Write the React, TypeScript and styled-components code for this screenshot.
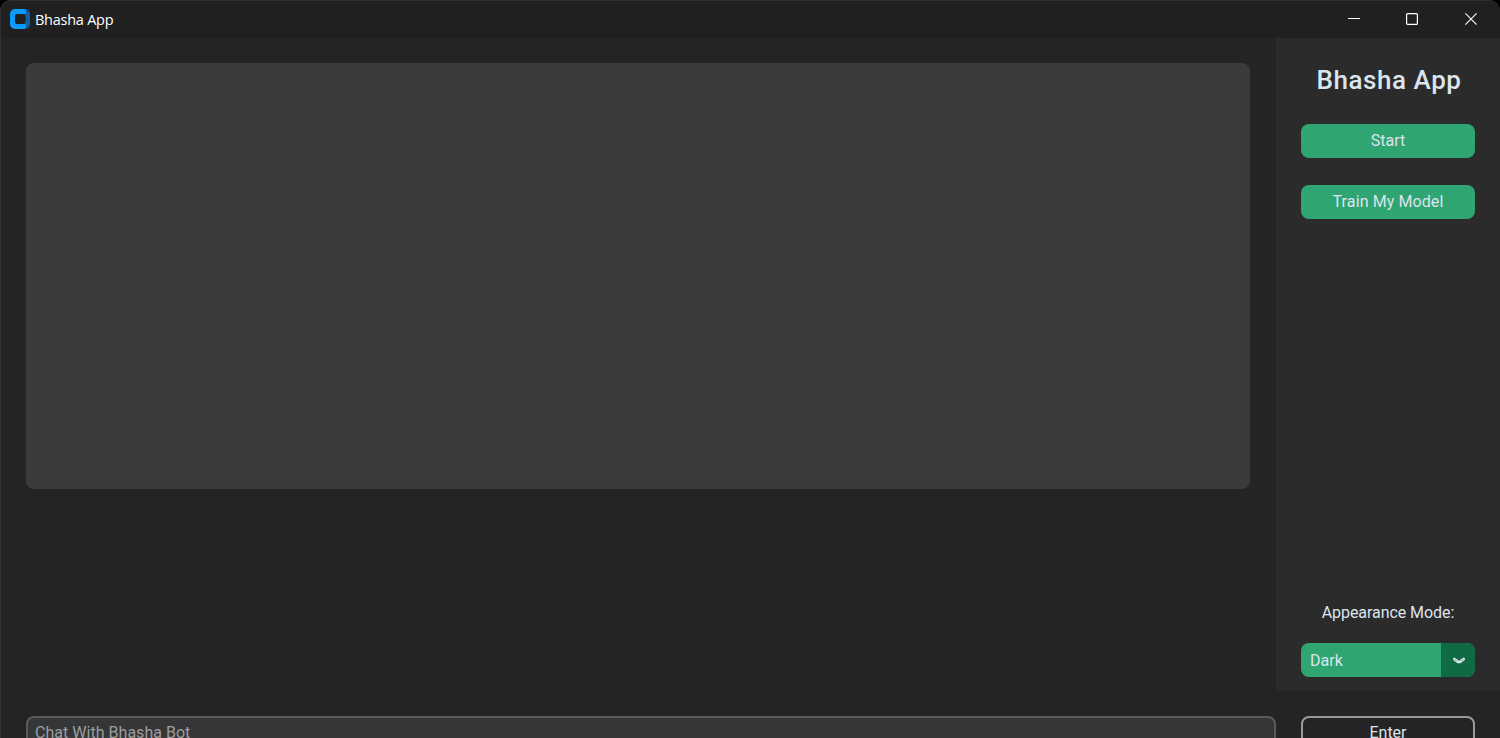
import { useState } from "react";
import styled, { createGlobalStyle } from "styled-components";

const App = () => {

    const [message, setMessage] = useState<string>("")
    const [mode, setMode] = useState<string>("Dark")

    const onModeClickHandler = () => {
        setMode(mode === "Dark" ? "Light" : "Dark")
    }

    return (
        <>
            <GlobalStyle/>
            <Window>
                <TitleBar>
                    <AppIcon/>
                    <TitleText>Bhasha App</TitleText>
                    <WindowControls/>
                </TitleBar>
                <Content>
                    <ChatArea>
                        <ChatBox/>
                    </ChatArea>
                    <SideBar>
                        <Logo>Bhasha App</Logo>
                        <GreenBtn>Start</GreenBtn>
                        <GreenBtn $spacing="0.1px">Train My Model</GreenBtn>
                        <ModeLabel>Appearance Mode:</ModeLabel>
                        <ModeMenu onClick={() => onModeClickHandler()}>
                            <ModeValue>{mode}</ModeValue>
                            <ModeArrow>
                                <svg width="14" height="10" viewBox="0 0 14 10" fill="none">
                                    <path d="M2.4 3.1L5.4 5.4Q7 6.4 8.6 5.4L11.6 3.1" stroke="#DCE4EE" strokeWidth="2.9"
                                          strokeLinecap="round" strokeLinejoin="round"/>
                                    <path d="M2.6 3.4L5 5.1M9 5.1L11.4 3.4" stroke="#5E9A83" strokeWidth="0.8"/>
                                </svg>
                            </ModeArrow>
                        </ModeMenu>
                    </SideBar>
                </Content>
                <BottomArea>
                    <ChatInput
                        value={message}
                        placeholder="Chat With Bhasha Bot"
                        onChange={(e) => setMessage(e.target.value)}
                    />
                    <EnterBtn>Enter</EnterBtn>
                </BottomArea>
            </Window>
        </>
    )
}

export default App

const AppIcon = () => (
    <IconSvg width="20" height="20" viewBox="0 0 20 20">
        <rect x="8" width="12" height="20" rx="5" fill="#0F5FA8"/>
        <path d="M5 0H14.5L16 2V4L14.5 5.5H7L5.5 7V13L7 14.5H14.5L16 16V18L14.5 20H5A5 5 0 0 1 0 15V5A5 5 0 0 1 5 0Z"
              fill="#0A9BFB"/>
        <rect x="5" y="5" width="10.5" height="10" rx="2" fill="#202020"/>
    </IconSvg>
)

const WindowControls = () => (
    <Controls>
        <ControlBtn aria-label="Minimize">
            <svg width="12" height="12" viewBox="0 0 12 12">
                <path d="M0 5.5H12" stroke="#FFFFFF"/>
            </svg>
        </ControlBtn>
        <ControlBtn aria-label="Maximize">
            <svg width="12" height="12" viewBox="0 0 12 12">
                <rect x="0.6" y="0.6" width="10.8" height="10.8" rx="1" fill="none" stroke="#FFFFFF" strokeWidth="1.2"/>
            </svg>
        </ControlBtn>
        <ControlBtn aria-label="Close">
            <svg width="12" height="12" viewBox="0 0 12 12">
                <path d="M0.4 0.4L11.6 11.6M11.6 0.4L0.4 11.6" stroke="#FFFFFF" strokeWidth="1.1"/>
            </svg>
        </ControlBtn>
    </Controls>
)

const GlobalStyle = createGlobalStyle`
    * {
        box-sizing: border-box;
    }

    body {
        margin: 0;
        overflow: hidden;
        background-color: #000000;
    }

    button, input {
        font-family: Roboto, sans-serif;
    }
`

const Window = styled.div`
    display: flex;
    flex-direction: column;
    width: 1500px;
    height: 738px;
    overflow: hidden;
    border-top: 1px solid #303030;
    border-left: 1px solid #303030;
    border-radius: 11px 11px 0 0;
    background-color: #242424;
    font-family: Roboto, sans-serif;
    color: #DCE4EE;
`

const TitleBar = styled.div`
    display: flex;
    flex-shrink: 0;
    align-items: center;
    height: 37px;
    padding-left: 9px;
    background-color: #202020;
`

const IconSvg = styled.svg`
    flex-shrink: 0;
    margin-bottom: 1px;
`

const TitleText = styled.div`
    margin-left: 5px;
    font-family: "Open Sans", sans-serif;
    font-size: 14.5px;
    line-height: 20px;
    letter-spacing: -0.25px;
    color: #FFFFFF;
`

const Controls = styled.div`
    display: flex;
    height: 37px;
    margin-left: auto;
`

const ControlBtn = styled.button`
    display: flex;
    align-items: center;
    justify-content: center;
    width: 58.5px;
    height: 36px;
    padding: 0;
    border: none;
    background-color: transparent;
`

const Content = styled.div`
    display: flex;
    flex-shrink: 0;
    height: 652px;
`

const ChatArea = styled.div`
    flex: 1;
    padding: 25px 26px 0 25px;
`

const ChatBox = styled.div`
    height: 426px;
    border-radius: 8px;
    background-color: #3B3B3B;
`

const SideBar = styled.div`
    display: flex;
    flex-direction: column;
    width: 224px;
    padding: 25px 25px 13px;
    background-color: #2B2B2B;
`

const Logo = styled.div`
    height: 34px;
    margin-bottom: 27px;
    padding-left: 2px;
    line-height: 35px;
    font-size: 26px;
    font-weight: 500;
    letter-spacing: 0.55px;
    text-align: center;
    white-space: nowrap;
`

const GreenBtn = styled.button<{
    $spacing?: string,
}>`
    width: 174px;
    height: 34px;
    margin-bottom: 27px;
    padding: 0;
    border: none;
    border-radius: 8px;
    background-color: #2FA572;
    font-size: 16px;
    line-height: 34px;
    letter-spacing: ${({$spacing}) => $spacing ?? "normal"};
    color: #DCE4EE;
`

const ModeLabel = styled.div`
    margin-top: auto;
    height: 34px;
    margin-bottom: 13px;
    font-size: 16px;
    line-height: 34px;
    letter-spacing: -0.06px;
    text-align: center;
`

const ModeMenu = styled.button`
    display: flex;
    width: 174px;
    height: 34px;
    padding: 0;
    overflow: hidden;
    border: none;
    border-radius: 8px;
    background-color: #2FA572;
    font-size: 16px;
    color: #DCE4EE;
`

const ModeValue = styled.span`
    width: 140px;
    padding-left: 9px;
    line-height: 36px;
    text-align: left;
`

const ModeArrow = styled.span`
    display: flex;
    align-items: center;
    justify-content: center;
    width: 34px;
    height: 34px;
    padding: 2px 0 0 1px;
    background-color: #106A43;
`

const BottomArea = styled.div`
    display: flex;
    flex-shrink: 0;
    gap: 25px;
    padding: 26px 25px 0;
`

const ChatInput = styled.input`
    width: 1250px;
    height: 34px;
    padding: 0 7px 2px;
    border: 2px solid #565B5E;
    border-radius: 8px;
    outline: none;
    background-color: #343638;
    font-size: 16px;
    letter-spacing: 0.03px;
    color: #DCE4EE;

    &::placeholder {
        color: #9E9E9E;
        opacity: 1;
    }
`

const EnterBtn = styled.button`
    width: 174px;
    height: 34px;
    padding: 0;
    border: 2px solid #949A9F;
    border-radius: 8px;
    background-color: transparent;
    font-size: 16px;
    line-height: 30px;
    color: #DCE4EE;
`
